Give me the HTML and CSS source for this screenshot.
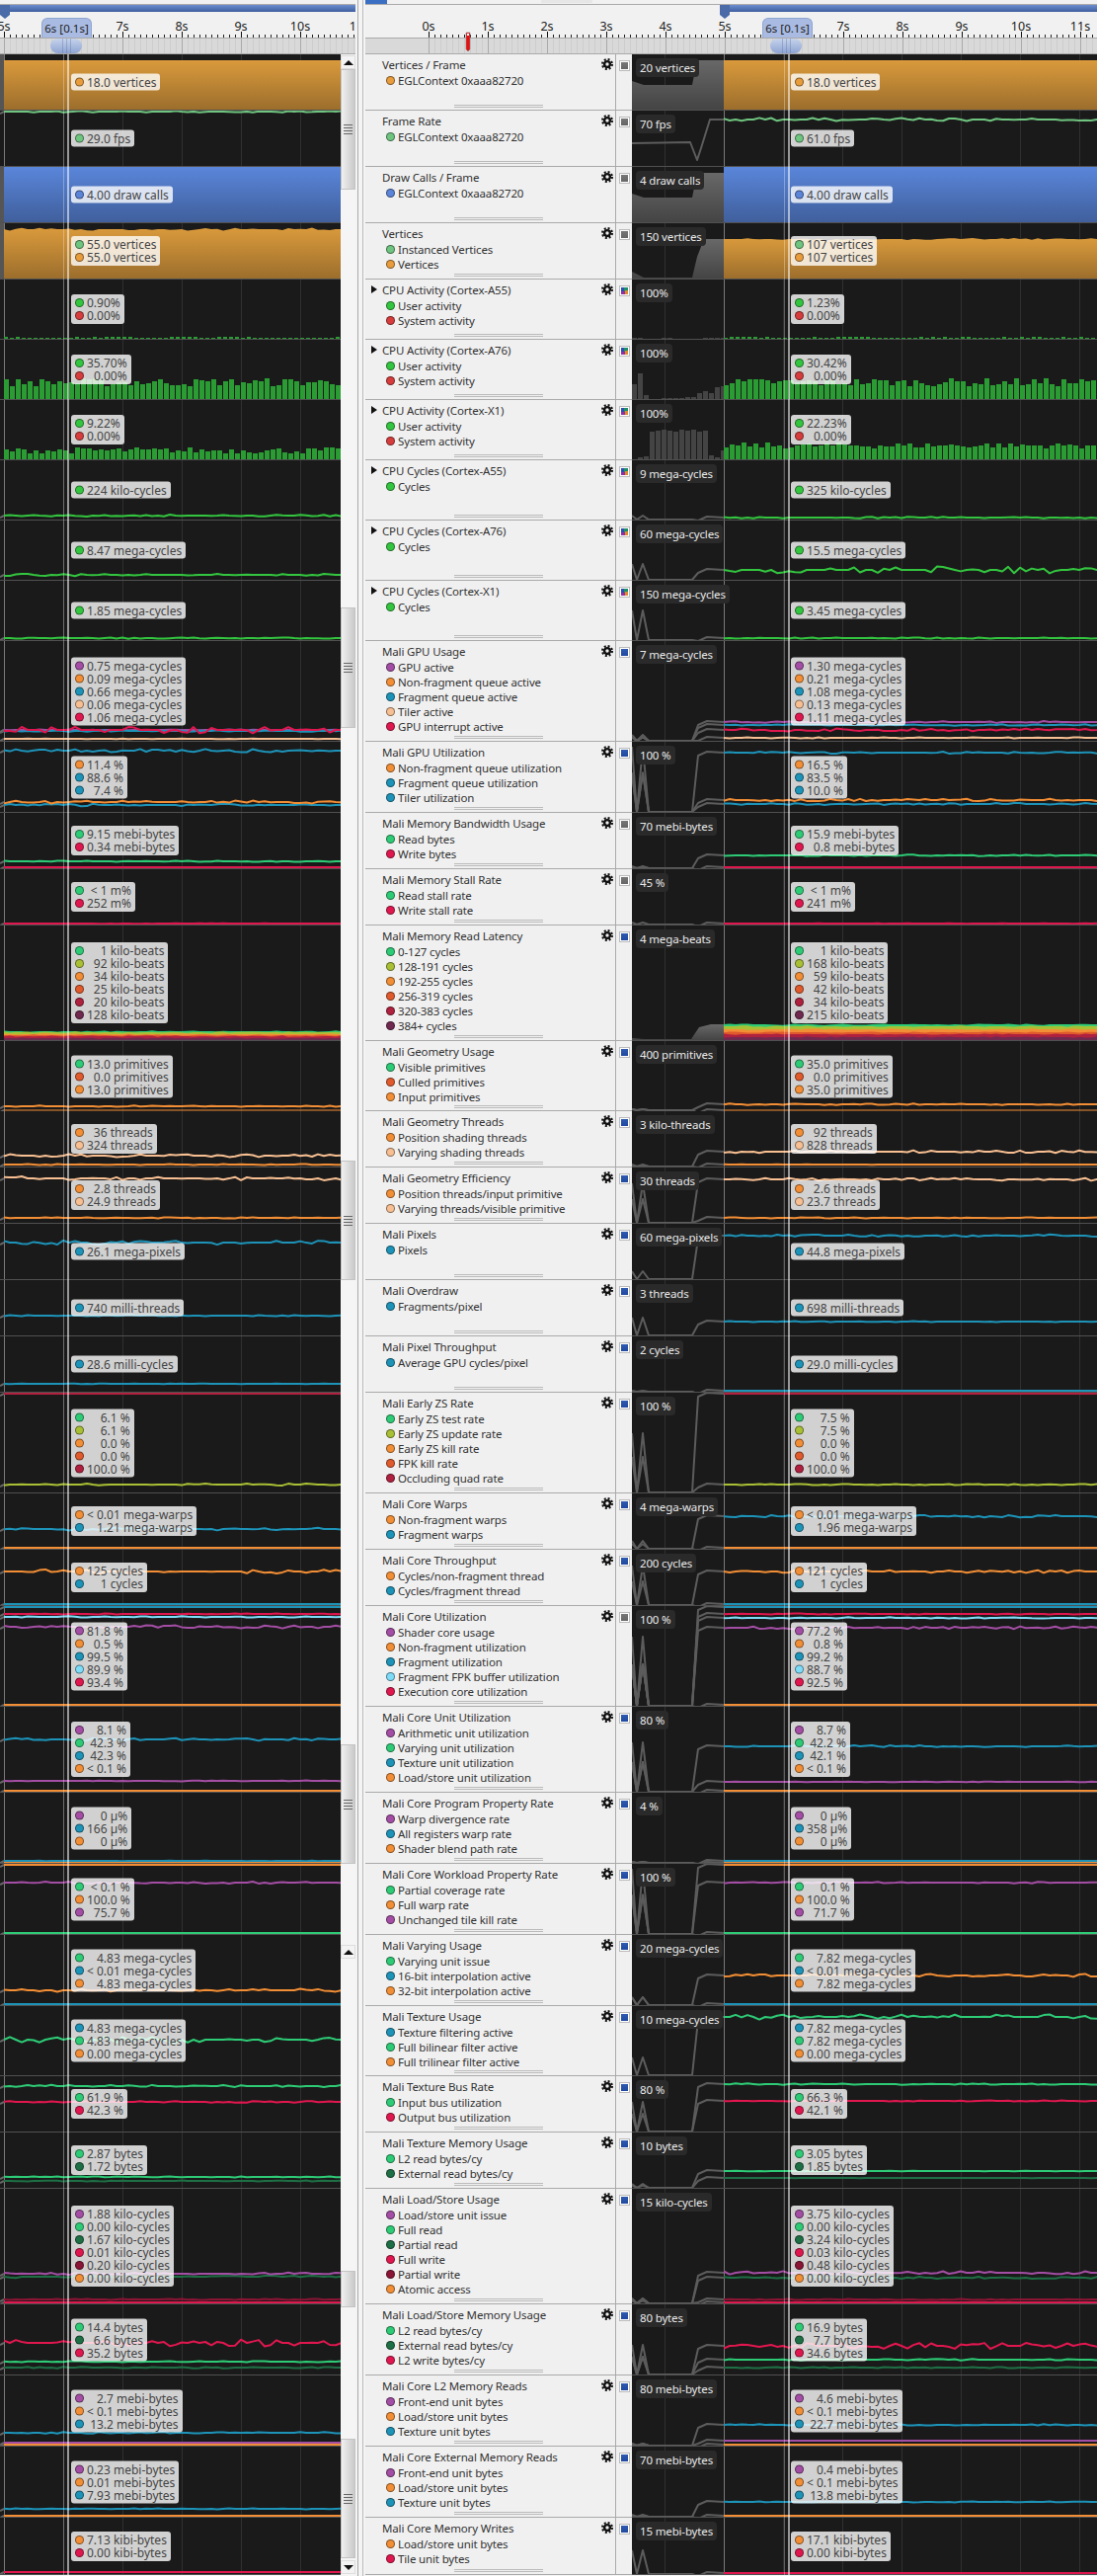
FILE: index.html
```html
<!DOCTYPE html>
<html lang="en">
<head>
  <meta charset="UTF-8">
  <title>Streamline Timeline</title>
  <link rel="stylesheet" href="styles.css">
</head>
<body>

<svg class="defs" width="0" height="0">
  <defs>
    <linearGradient id="fill-orange" x1="0" y1="0" x2="0" y2="1"><stop offset="0" stop-color="#da9a3c"/><stop offset="1" stop-color="#9c6e2c"/></linearGradient>
    <linearGradient id="fill-blue" x1="0" y1="0" x2="0" y2="1"><stop offset="0" stop-color="#5a86da"/><stop offset="1" stop-color="#405f9c"/></linearGradient>
    <linearGradient id="fill-grey" x1="0" y1="0" x2="0" y2="1"><stop offset="0" stop-color="#686868"/><stop offset="1" stop-color="#444"/></linearGradient>
    <linearGradient id="bar-blue" x1="0" y1="0" x2="0" y2="1"><stop offset="0" stop-color="#6b8dcf"/><stop offset="1" stop-color="#3f5f9f"/></linearGradient>
  </defs>
</svg>

<div class="app">
  <div class="pane-left">
    <div class="timeline" id="timeline-left">
      <div class="time-bubble">6s [0.1s]</div>
      <div class="time-pill"></div>
    </div>
    <div class="pane-body">
      <div class="chart-column" id="rows-left"></div>
      <div class="scrollbar" id="scrollbar"></div>
    </div>
  </div>
  <div class="sash"></div>
  <div class="pane-right">
    <div class="timeline" id="timeline-right">
      <div class="time-bubble">6s [0.1s]</div>
      <div class="time-pill"></div>
    </div>
    <div id="rows-right"></div>
  </div>
</div>

<script src="script.js"></script>
</body>
</html>
```

FILE: styles.css
```css
body {
  margin: 0;
  height: 2608px;
  overflow: hidden;
  background-color: #f4f4f4;
  color: #222;
  font: 12px "Noto Sans", "Open Sans", sans-serif;
}
.defs {
  position: absolute;
}
.app {
  display: flex;
}
.pane-left {
  width: 360px;
}
.sash {
  width: 4px;
  margin: 0 2px;
  height: 2608px;
  border-left: 1px solid #aaa;
  border-right: 1px solid #bbb;
}
.pane-right {
  flex: 1;
  min-width: 0;
}

/* timeline header */
.timeline {
  position: relative;
  height: 55px;
  overflow: hidden;
  background-color: #f1f1f1;
}
.timeline svg {
  display: block;
}
.timeline text {
  font: 12.5px "Noto Sans", sans-serif;
  fill: #222;
  text-anchor: middle;
}
.time-bubble {
  position: absolute;
  top: 18px;
  left: 42px;
  width: 51px;
  height: 20px;
  box-sizing: border-box;
  text-align: center;
  line-height: 20px;
  font-size: 11.5px;
  white-space: nowrap;
  background-color: #a9bbe2;
  border: 1px solid #8ea4d0;
  border-bottom: none;
  border-radius: 6px 6px 0 0;
}
.time-pill {
  position: absolute;
  top: 39px;
  left: 51px;
  width: 32px;
  height: 15px;
  border-radius: 8px;
  background: repeating-linear-gradient(90deg, transparent 0 3px, rgba(90, 110, 160, .35) 3px 4px) 9px 0 / 14px 100% no-repeat,
    linear-gradient(#c6d3ec, #8ea4d2);
}
#timeline-right .time-bubble {
  left: 402px;
}
#timeline-right .time-pill {
  left: 410px;
}

/* left pane */
.pane-body {
  display: flex;
}
.chart-column {
  position: relative;
  width: 345px;
}
.scrollbar {
  width: 15px;
  height: 2553px;
  display: flex;
  flex-direction: column;
  flex-shrink: 0;
  background-color: #f5f5f5;
}
.sb-thumb {
  box-sizing: border-box;
  display: flex;
  align-items: center;
  justify-content: center;
  background: linear-gradient(90deg, #f0f0f0, #c9c9c9);
  border: 1px solid #c4c4c4;
  flex-shrink: 0;
}
.sb-grip {
  width: 9px;
  height: 10px;
  background: repeating-linear-gradient(#666 0 1px, transparent 1px 3px);
}
.sb-button {
  box-sizing: border-box;
  height: 14px;
  display: flex;
  align-items: center;
  justify-content: center;
  background-color: #f3f3f3;
  border: 1px solid #ddd;
  flex-shrink: 0;
}
.sb-up {
  border-left: 5px solid transparent;
  border-right: 5px solid transparent;
  border-bottom: 5px solid #111;
}
.sb-down {
  border-left: 5px solid transparent;
  border-right: 5px solid transparent;
  border-top: 5px solid #111;
}

/* chart cells */
.chart {
  position: relative;
  box-sizing: border-box;
  background-color: #1a1a1a;
  border-bottom: 1px solid #505050;
  overflow: hidden;
}
.chart svg {
  display: block;
}
.no-line {
  border-bottom: none;
}
.bar {
  shape-rendering: crispEdges;
}
.cursor {
  position: absolute;
  top: 55px;
  bottom: 1px;
  left: 64px;
  width: 3px;
  border-left: 1px solid rgba(255, 255, 255, .3);
  border-right: 2px solid rgba(255, 255, 255, .55);
  pointer-events: none;
}
.tip {
  position: absolute;
  top: 50%;
  left: 72px;
  transform: translateY(-50%);
  display: grid;
  grid-template-columns: auto auto;
  column-gap: 3px;
  align-items: center;
  padding: 2px 4px;
  line-height: 13px;
  color: #444;
  white-space: nowrap;
  background-color: rgba(255, 255, 255, .8);
  border-radius: 3px;
}
.tip span {
  text-align: right;
}
.dot {
  display: inline-block;
  box-sizing: border-box;
  width: 9px;
  height: 9px;
  border-radius: 50%;
  border: 1px solid rgba(0, 0, 0, .45);
}
.chart-right .tip {
  left: 161px;
}
.value-label {
  position: absolute;
  top: 4px;
  left: 4px;
  padding: 0 4px;
  height: 19px;
  line-height: 19px;
  font-size: 11.5px;
  letter-spacing: -.15px;
  color: #e8e8e8;
  background-color: #2a2a2a;
  border-radius: 4px;
  white-space: nowrap;
}

/* right pane rows */
.row {
  display: flex;
  box-sizing: border-box;
}
.row-info {
  width: 253px;
  display: flex;
  flex-direction: column;
  box-sizing: border-box;
  font-size: 11.5px;
  letter-spacing: -.15px;
  background-color: #f0f0f0;
  border-bottom: 1px solid #aaa;
}
.row-head {
  display: flex;
  align-items: center;
  height: 18px;
  margin-top: 1px;
  padding-right: 2px;
  color: #333;
}
.row-arrow {
  width: 17px;
  flex-shrink: 0;
}
.row-arrow.open {
  box-sizing: border-box;
  height: 8px;
  width: 0;
  margin: 0 5px 0 6px;
  border-top: 4px solid transparent;
  border-bottom: 4px solid transparent;
  border-left: 6px solid #111;
}
.row-title {
  flex: 1;
  white-space: nowrap;
}
.gear {
  display: block;
  flex-shrink: 0;
}
.legend-item {
  display: flex;
  align-items: center;
  height: 15px;
  padding-left: 21px;
  column-gap: 3px;
  white-space: nowrap;
  color: #333;
}
.row-handle {
  margin: auto 0 2px 90px;
  width: 90px;
  height: 1px;
  border-top: 1px solid #bbb;
  border-bottom: 1px solid #bbb;
}
.row-tools {
  width: 17px;
  box-sizing: border-box;
  padding: 6px 0 0 3px;
  background-color: #f0f0f0;
  border-left: 1px solid #aaa;
  border-bottom: 1px solid #aaa;
}
.row-check {
  width: 11px;
  height: 11px;
  box-sizing: border-box;
  border: 1px solid #bbb;
  background-color: #fff;
  padding: 1px;
}
.row-check div {
  width: 7px;
  height: 7px;
}
.check-grey div {
  background: linear-gradient(#777, #666);
}
.check-blue div {
  background: linear-gradient(#2f5bb0, #2048a0);
}
.check-multi div {
  background: conic-gradient(#1f8f6a 0 25%, #e08a2a 25% 50%, #8e2fa8 50% 75%, #2c4fb0 75%);
}
.chart-right {
  width: 471px;
  flex-shrink: 0;
}
```

FILE: script.js
```js
// palette of the counters
const P = "#a34ea4", O = "#f28e35", T = "#1d93b8", PE = "#f7bf92", C = "#e0174f", G = "#2ecb76",
  DG = "#1e6f45", Y = "#a9c035", RO = "#e05a2c", M = "#b0213f", DP = "#70294f", LB = "#7fdcf8",
  CG = "#33c53f", CR = "#d63c3c", VO = "#e89c3c", FG = "#6fc47f", B = "#5c84d8", DR = "#8a1535";

const CPU = [["User activity", CG], ["System activity", CR]];
const UNIT = [["Front-end unit bytes", P], ["Load/store unit bytes", O], ["Texture unit bytes", T]];

// s: [colour, left y, left wiggle, right y, right wiggle, stroke]; y values are page coordinates
const rows = [
  { t: "Vertices / Frame", h: 57, chk: "grey", label: "20 vertices", legend: [["EGLContext 0xaaa82720", VO]],
    L: ["18.0 vertices"], R: ["18.0 vertices"], area: ["orange", 61, 0, 61, 0],
    ov: [[0, 82], [12, 86], [61, 86], [66, 61], [93, 61]] },
  { t: "Frame Rate", h: 57, chk: "grey", label: "70 fps", legend: [["EGLContext 0xaaa82720", FG]],
    L: ["29.0 fps"], R: ["61.0 fps"], s: [[FG, 113, .8, 121, 1.6]],
    ovLine: [[0, 145], [59, 144], [66, 162], [70, 150], [79, 121], [93, 121]] },
  { t: "Draw Calls / Frame", h: 57, chk: "grey", label: "4 draw calls", legend: [["EGLContext 0xaaa82720", B]],
    L: ["4.00 draw calls"], R: ["4.00 draw calls"], area: ["blue", 169, 0, 169, 0],
    ov: [[0, 196], [12, 200], [61, 200], [66, 175], [93, 175]] },
  { t: "Vertices", h: 57, chk: "grey", label: "150 vertices", legend: [["Instanced Vertices", FG], ["Vertices", VO]],
    L: ["55.0 vertices", "55.0 vertices"], R: ["107 vertices", "107 vertices"], area: ["orange", 232, 1.5, 242, 1],
    ov: [[0, 275], [12, 281], [61, 281], [66, 260], [73, 242], [93, 242]] },
  { t: "CPU Activity (Cortex-A55)", h: 61, arrow: 1, chk: "multi", label: "100%", legend: CPU,
    L: ["0.90%", "0.00%"], R: ["1.23%", "0.00%"], bars: [1.4, .4, 1.4, .4], ovBars: [1, 1, 0, 0, 0, 1, 1, 0, 0, 0, 0, 0, 1, 1, 1, 1] },
  { t: "CPU Activity (Cortex-A76)", h: 61, arrow: 1, chk: "multi", label: "100%", legend: CPU,
    L: ["35.70%", "0.00%"], R: ["30.42%", "0.00%"], bars: [17, 4, 17, 4], ovBars: [15, 26, 4, 0, 0, 1, 1, 1, 1, 2, 2, 6, 8, 6, 12, 13] },
  { t: "CPU Activity (Cortex-X1)", h: 61, arrow: 1, chk: "multi", label: "100%", legend: CPU,
    L: ["9.22%", "0.00%"], R: ["22.23%", "0.00%"], bars: [9, 3, 14, 3], ovBars: [0, 2, 3, 28, 29, 30, 29, 28, 30, 29, 30, 28, 29, 4, 2, 9] },
  { t: "CPU Cycles (Cortex-A55)", h: 61, arrow: 1, chk: "multi", label: "9 mega-cycles", legend: [["Cycles", CG]],
    L: ["224 kilo-cycles"], R: ["325 kilo-cycles"], sp: 4, s: [[CG, 522, 1, 524, .8]] },
  { t: "CPU Cycles (Cortex-A76)", h: 61, arrow: 1, chk: "multi", label: "60 mega-cycles", legend: [["Cycles", CG]],
    L: ["8.47 mega-cycles"], R: ["15.5 mega-cycles"], sp: 16, s: [[CG, 582, 1.2, 577, 3.5]] },
  { t: "CPU Cycles (Cortex-X1)", h: 61, arrow: 1, chk: "multi", label: "150 mega-cycles", legend: [["Cycles", CG]],
    L: ["1.85 mega-cycles"], R: ["3.45 mega-cycles"], sp: 30, s: [[CG, 646, .7, 646, .5]] },
  { t: "Mali GPU Usage", h: 102, chk: "blue", label: "7 mega-cycles",
    legend: [["GPU active", P], ["Non-fragment queue active", O], ["Fragment queue active", T], ["Tiler active", PE], ["GPU interrupt active", C]],
    L: ["0.75 mega-cycles", "0.09 mega-cycles", "0.66 mega-cycles", "0.06 mega-cycles", "1.06 mega-cycles"],
    R: ["1.30 mega-cycles", "0.21 mega-cycles", "1.08 mega-cycles", "0.13 mega-cycles", "1.11 mega-cycles"],
    s: [[P, 739, .6, 731, 1], [T, 740, .8, 734, .7], [C, 739, 3.5, 739, 1.4], [PE, 748, .2, 747, .6]] },
  { t: "Mali GPU Utilization", h: 72, chk: "blue", label: "100 %", sp: 66,
    legend: [["Non-fragment queue utilization", O], ["Fragment queue utilization", T], ["Tiler utilization", T]],
    L: ["11.4 %", "88.6 %", "7.4 %"], R: ["16.5 %", "83.5 %", "10.0 %"],
    s: [[T, 760, 1.6, 762, 1], [T, 815, 1.2, 814, 1], [O, 812, 1.5, 810, 1.2]] },
  { t: "Mali Memory Bandwidth Usage", h: 57, chk: "grey", label: "70 mebi-bytes", legend: [["Read bytes", G], ["Write bytes", C]],
    L: ["9.15 mebi-bytes", "0.34 mebi-bytes"], R: ["15.9 mebi-bytes", "0.8 mebi-bytes"], sp: 2,
    s: [[G, 872, .6, 866, .7], [C, 878, 0, 878, 0]] },
  { t: "Mali Memory Stall Rate", h: 57, chk: "grey", label: "45 %", legend: [["Read stall rate", G], ["Write stall rate", C]],
    L: ["< 1 m%", "252 m%"], R: ["< 1 m%", "241 m%"], sp: 2, s: [[C, 935, .2, 935, .2]] },
  { t: "Mali Memory Read Latency", h: 117, chk: "blue", label: "4 mega-beats",
    legend: [["0-127 cycles", G], ["128-191 cycles", Y], ["192-255 cycles", O], ["256-319 cycles", RO], ["320-383 cycles", M], ["384+ cycles", DP]],
    L: ["1 kilo-beats", "92 kilo-beats", "34 kilo-beats", "25 kilo-beats", "20 kilo-beats", "128 kilo-beats"],
    R: ["1 kilo-beats", "168 kilo-beats", "59 kilo-beats", "42 kilo-beats", "34 kilo-beats", "215 kilo-beats"],
    stack: [[G, 1044, 1037], [Y, 1045, 1039], [O, 1047, 1042], [RO, 1048, 1045], [M, 1049, 1047], [DP, 1051, 1050]],
    ov: [[0, 1051], [12, 1052], [60, 1052], [68, 1040], [80, 1037], [93, 1037]] },
  { t: "Mali Geometry Usage", h: 71, noLine: 1, chk: "blue", label: "400 primitives",
    legend: [["Visible primitives", G], ["Culled primitives", RO], ["Input primitives", O]],
    L: ["13.0 primitives", "0.0 primitives", "13.0 primitives"], R: ["35.0 primitives", "0.0 primitives", "35.0 primitives"], sp: 1,
    s: [[O, 1120, .7, 1118, .8], [O, 1124, 0, 1124, 0, 1]] },
  { t: "Mali Geometry Threads", h: 57, chk: "blue", label: "3 kilo-threads",
    legend: [["Position shading threads", O], ["Varying shading threads", PE]],
    L: ["36 threads", "324 threads"], R: ["92 threads", "828 threads"], sp: 2,
    s: [[PE, 1170, 1.5, 1166, 1.4], [O, 1179, .5, 1179, .2]] },
  { t: "Mali Geometry Efficiency", h: 57, chk: "blue", label: "30 threads",
    legend: [["Position threads/input primitive", O], ["Varying threads/visible primitive", PE]],
    L: ["2.8 threads", "24.9 threads"], R: ["2.6 threads", "23.7 threads"], sp: 40,
    s: [[PE, 1193, 2, 1194, 1.4], [O, 1233, .6, 1233, .5]] },
  { t: "Mali Pixels", h: 57, chk: "blue", label: "60 mega-pixels", legend: [["Pixels", T]],
    L: ["26.1 mega-pixels"], R: ["44.8 mega-pixels"], sp: 8, s: [[T, 1258, 2.2, 1251, 1.2]] },
  { t: "Mali Overdraw", h: 57, chk: "blue", label: "3 threads", legend: [["Fragments/pixel", T]],
    L: ["740 milli-threads"], R: ["698 milli-threads"], sp: 18, s: [[T, 1332, .7, 1338, .5]] },
  { t: "Mali Pixel Throughput", h: 57, chk: "blue", label: "2 cycles", legend: [["Average GPU cycles/pixel", T]],
    L: ["28.6 milli-cycles"], R: ["29.0 milli-cycles"], sp: 1, s: [[T, 1401, .3, 1408, 0]] },
  { t: "Mali Early ZS Rate", h: 102, chk: "blue", label: "100 %", sp: 60,
    legend: [["Early ZS test rate", G], ["Early ZS update rate", Y], ["Early ZS kill rate", O], ["FPK kill rate", RO], ["Occluding quad rate", M]],
    L: ["6.1 %", "6.1 %", "0.0 %", "0.0 %", "100.0 %"], R: ["7.5 %", "7.5 %", "0.0 %", "0.0 %", "100.0 %"],
    s: [[M, 1411, 0, 1411, 0], [Y, 1503, 1, 1503, .6]] },
  { t: "Mali Core Warps", h: 57, chk: "blue", label: "4 mega-warps", legend: [["Non-fragment warps", O], ["Fragment warps", T]],
    L: ["< 0.01 mega-warps", "1.21 mega-warps"], R: ["< 0.01 mega-warps", "1.96 mega-warps"], sp: 8,
    s: [[T, 1548, 1.5, 1535, 1.2], [O, 1567, 0, 1567, 0]] },
  { t: "Mali Core Throughput", h: 57, chk: "blue", label: "200 cycles", legend: [["Cycles/non-fragment thread", O], ["Cycles/fragment thread", T]],
    L: ["125 cycles", "1 cycles"], R: ["121 cycles", "1 cycles"], sp: 40,
    s: [[O, 1591, 3, 1591, 1.4], [T, 1624, 0, 1624, 0]] },
  { t: "Mali Core Utilization", h: 102, chk: "grey", label: "100 %", sp: 70,
    legend: [["Shader core usage", P], ["Non-fragment utilization", O], ["Fragment utilization", T], ["Fragment FPK buffer utilization", LB], ["Execution core utilization", C]],
    L: ["81.8 %", "0.5 %", "99.5 %", "89.9 %", "93.4 %"], R: ["77.2 %", "0.8 %", "99.2 %", "88.7 %", "92.5 %"],
    s: [[T, 1627, 0, 1627, 0], [C, 1634, .6, 1634, .5], [LB, 1637, .7, 1638, .7], [P, 1647, 1.6, 1648, 1.4], [O, 1726, 0, 1726, 0]] },
  { t: "Mali Core Unit Utilization", h: 87, chk: "blue", label: "80 %", sp: 50,
    legend: [["Arithmetic unit utilization", P], ["Varying unit utilization", G], ["Texture unit utilization", T], ["Load/store unit utilization", O]],
    L: ["8.1 %", "42.3 %", "42.3 %", "< 0.1 %"], R: ["8.7 %", "42.2 %", "42.1 %", "< 0.1 %"],
    s: [[T, 1761, 1.4, 1768, 1], [P, 1803, .4, 1804, .3], [O, 1813, 0, 1813, 0]] },
  { t: "Mali Core Program Property Rate", h: 72, chk: "blue", label: "4 %", sp: 1,
    legend: [["Warp divergence rate", P], ["All registers warp rate", T], ["Shader blend path rate", O]],
    L: ["0 µ%", "166 µ%", "0 µ%"], R: ["0 µ%", "358 µ%", "0 µ%"],
    s: [[T, 1884, .2, 1884, .1], [O, 1886, 0, 1886, 0]] },
  { t: "Mali Core Workload Property Rate", h: 72, chk: "blue", label: "100 %", sp: 66,
    legend: [["Partial coverage rate", G], ["Full warp rate", O], ["Unchanged tile kill rate", P]],
    L: ["< 0.1 %", "100.0 %", "75.7 %"], R: ["0.1 %", "100.0 %", "71.7 %"],
    s: [[O, 1888, 0, 1888, 0], [P, 1906, 1.1, 1906, .8], [G, 1957, 0, 1957, 0]] },
  { t: "Mali Varying Usage", h: 72, chk: "blue", label: "20 mega-cycles", sp: 8,
    legend: [["Varying unit issue", G], ["16-bit interpolation active", T], ["32-bit interpolation active", O]],
    L: ["4.83 mega-cycles", "< 0.01 mega-cycles", "4.83 mega-cycles"], R: ["7.82 mega-cycles", "< 0.01 mega-cycles", "7.82 mega-cycles"],
    s: [[T, 2029, 0, 2029, 0], [O, 2015, 1.5, 2000, 1.6]] },
  { t: "Mali Texture Usage", h: 71, chk: "blue", label: "10 mega-cycles", sp: 18,
    legend: [["Texture filtering active", T], ["Full bilinear filter active", G], ["Full trilinear filter active", O]],
    L: ["4.83 mega-cycles", "4.83 mega-cycles", "0.00 mega-cycles"], R: ["7.82 mega-cycles", "7.82 mega-cycles", "0.00 mega-cycles"],
    s: [[G, 2065, 3, 2042, 2.6]] },
  { t: "Mali Texture Bus Rate", h: 57, chk: "blue", label: "80 %", sp: 30, legend: [["Input bus utilization", G], ["Output bus utilization", C]],
    L: ["61.9 %", "42.3 %"], R: ["66.3 %", "42.1 %"], s: [[G, 2112, 1.2, 2110, .7], [C, 2128, .8, 2127, .5]] },
  { t: "Mali Texture Memory Usage", h: 57, chk: "blue", label: "10 bytes", sp: 4, legend: [["L2 read bytes/cy", G], ["External read bytes/cy", DG]],
    L: ["2.87 bytes", "1.72 bytes"], R: ["3.05 bytes", "1.85 bytes"], s: [[G, 2204, .5, 2198, .2], [DG, 2208, .4, 2205, .2]] },
  { t: "Mali Load/Store Usage", h: 117, chk: "blue", label: "15 kilo-cycles", sp: 5,
    legend: [["Load/store unit issue", P], ["Full read", G], ["Partial read", DG], ["Full write", C], ["Partial write", DR], ["Atomic access", O]],
    L: ["1.88 kilo-cycles", "0.00 kilo-cycles", "1.67 kilo-cycles", "0.01 kilo-cycles", "0.20 kilo-cycles", "0.00 kilo-cycles"],
    R: ["3.75 kilo-cycles", "0.00 kilo-cycles", "3.24 kilo-cycles", "0.03 kilo-cycles", "0.48 kilo-cycles", "0.00 kilo-cycles"],
    s: [[DG, 2305, 1.2, 2306, 1], [P, 2302, 1.4, 2301, 1.6], [DR, 2328, .6, 2328, .6], [C, 2331, 0, 2331, 0]] },
  { t: "Mali Load/Store Memory Usage", h: 72, chk: "blue", label: "80 bytes", sp: 30,
    legend: [["L2 read bytes/cy", G], ["External read bytes/cy", DG], ["L2 write bytes/cy", C]],
    L: ["14.4 bytes", "6.6 bytes", "35.2 bytes"], R: ["16.9 bytes", "7.7 bytes", "34.6 bytes"],
    s: [[C, 2372, 3.5, 2375, 3], [G, 2391, .6, 2389, .8], [DG, 2397, .8, 2397, .6]] },
  { t: "Mali Core L2 Memory Reads", h: 72, chk: "blue", label: "80 mebi-bytes", sp: 2, legend: UNIT,
    L: ["2.7 mebi-bytes", "< 0.1 mebi-bytes", "13.2 mebi-bytes"], R: ["4.6 mebi-bytes", "< 0.1 mebi-bytes", "22.7 mebi-bytes"],
    s: [[T, 2463, .8, 2455, .7], [P, 2473, 0, 2471, 0], [O, 2475, 0, 2475, 0]] },
  { t: "Mali Core External Memory Reads", h: 72, chk: "blue", label: "70 mebi-bytes", sp: 2, legend: UNIT,
    L: ["0.23 mebi-bytes", "0.01 mebi-bytes", "7.93 mebi-bytes"], R: ["0.4 mebi-bytes", "< 0.1 mebi-bytes", "13.8 mebi-bytes"],
    s: [[T, 2540, .5, 2533, .4], [O, 2547, 0, 2547, 0]] },
  { t: "Mali Core Memory Writes", h: 58, chk: "blue", label: "15 mebi-bytes", sp: 24, legend: [["Load/store unit bytes", O], ["Tile unit bytes", C]],
    L: ["7.13 kibi-bytes", "0.00 kibi-bytes"], R: ["17.1 kibi-bytes", "0.00 kibi-bytes"], s: [[C, 2604, 0, 2605, 0]] }
];

const GEAR = '<svg class="gear" width="12" height="12" viewBox="0 0 12 12"><circle cx="6" cy="6" r="2.9" fill="none" stroke="#111" stroke-width="2.4"/><circle cx="6" cy="6" r="4.9" fill="none" stroke="#111" stroke-width="2.2" stroke-dasharray="1.95 1.9"/></svg>';

// small repeatable random numbers so each series gets its own wobble
let seed = 7;
function rand() {
  seed = (seed * 16807) % 2147483647;
  return seed / 2147483647;
}

function wobble(y, amp, x0, x1) {
  const pts = [];
  for (let x = x0; x <= x1; x += 6) {
    const off = rand() < 0.35 ? 0 : (rand() * 2 - 1) * amp;
    pts.push([x, y + off]);
  }
  return pts;
}

function str(pts) {
  return pts.map(p => p[0] + "," + p[1].toFixed(1)).join(" ");
}

function line(pts, colour, width) {
  return `<polyline points="${str(pts)}" fill="none" stroke="${colour}" stroke-width="${width}" stroke-linejoin="round"/>`;
}

function plot(row, top, right) {
  const w = right ? 471 : 345;
  const x0 = right ? 93 : 4;
  const bottom = top + row.h - 1;
  let out = "";

  // gridlines, one per second
  for (let x = x0 - 60; x < w; x += 60) {
    if (x < 0) continue;
    out += `<rect x="${x}" y="${top}" width="1" height="${row.h}" fill="${x === x0 ? "#7a7a7a" : "#303030"}"/>`;
  }

  // grey summary before the 5s mark
  if (right && row.ov) {
    out += `<polygon points="${str(row.ov)} 93,${bottom} 0,${bottom}" fill="url(#fill-grey)"/>`;
  }
  if (right && row.ovLine) {
    out += line(row.ovLine, "#5c5c5c", 2);
  }
  if (right && row.ovBars) {
    row.ovBars.forEach((b, i) => {
      out += `<rect x="${i * 6}" y="${bottom - b}" width="5" height="${b}" fill="#444"/>`;
    });
  }
  if (right && row.s && !row.ovLine) {
    const sp = row.sp === undefined ? 6 : row.sp;
    row.s.forEach((s, i) => {
      const scale = i === row.s.length - 1 || s[3] > bottom - 8 ? 1 : .6;
      const tip = bottom - sp * scale;
      out += line([[0, tip], [5, bottom], [11, tip], [17, bottom], [61, bottom], [67, s[3] + 3], [76, s[3] - 1], [93, s[3]]], "#5c5c5c", 2);
    });
  }
  if (!right && row.s) {
    row.s.forEach(s => { out += line([[0, s[1] + 2], [4, s[1]]], "#666", 2); });
  }

  const yi = right ? 3 : 1;

  if (row.area) {
    const pts = wobble(row.area[yi], row.area[yi + 1], x0, w + 6);
    out += `<polygon points="${str(pts)} ${w},${bottom} ${x0},${bottom}" fill="url(#fill-${row.area[0]})"/>`;
    if (!right) out += `<rect x="0" y="${top}" width="4" height="${row.h - 1}" fill="#555"/>`;
  }
  if (row.bars) {
    const h = row.bars[right ? 2 : 0];
    const v = row.bars[right ? 3 : 1];
    const gap = h < 2 ? 2 : 1;
    for (let x = x0; x < w; x += 6) {
      const bh = Math.round(Math.max(1, h + (rand() * 2 - 1) * v));
      out += `<rect class="bar" x="${x}" y="${bottom - bh}" width="${6 - gap}" height="${bh}" fill="#2a9c33"/>`;
    }
  }
  if (row.stack) {
    row.stack.forEach(s => {
      const pts = wobble(s[right ? 2 : 1], .7, x0, w + 6);
      out += `<polygon points="${str(pts)} ${w},${bottom} ${x0},${bottom}" fill="${s[0]}"/>`;
    });
  }
  if (row.s) {
    row.s.forEach(s => {
      out += line(wobble(s[yi], s[yi + 1], x0, w + 6), s[0], s[5] || 2);
    });
  }

  // coordinates in the rows are page based, so shift the drawing up to the cell
  return `<svg width="${w}" height="${row.h}" viewBox="0 ${top} ${w} ${row.h}">${out}</svg>`;
}

function tip(row, right) {
  const vals = right ? row.R : row.L;
  const cells = vals.map((v, i) => `<i class="dot" style="background-color:${row.legend[i][1]}"></i><span>${v}</span>`).join("");
  return `<div class="tip">${cells}</div>`;
}

function info(row) {
  const legend = row.legend.map(l => `<div class="legend-item"><i class="dot" style="background-color:${l[1]}"></i>${l[0]}</div>`).join("");
  return `<div class="row-info">
    <div class="row-head"><span class="row-arrow${row.arrow ? " open" : ""}"></span><span class="row-title">${row.t}</span>${GEAR}</div>
    ${legend}
    <div class="row-handle"></div>
  </div>
  <div class="row-tools"><div class="row-check check-${row.chk}"><div></div></div></div>`;
}

function buildRows() {
  let left = "", right = "", top = 55;
  rows.forEach(row => {
    const line = row.noLine ? " no-line" : "";
    const h = `style="height:${row.h}px"`;
    left += `<div class="chart${line}" ${h}>${plot(row, top, false)}${tip(row, false)}</div>`;
    right += `<div class="row" ${h}>${info(row)}<div class="chart chart-right${line}">${plot(row, top, true)}<div class="value-label">${row.label}</div>${tip(row, true)}</div></div>`;
    top += row.h;
  });
  document.getElementById("rows-left").innerHTML = left + '<div class="cursor" style="top:0"></div>';
  document.getElementById("rows-right").innerHTML = right;
  const cursor = document.createElement("div");
  cursor.className = "cursor";
  cursor.style.left = "794px";
  document.body.appendChild(cursor);
}

function buildTimeline(el, opts) {
  const w = opts.width;
  let s = `<rect x="0" y="4" width="${w}" height="1" fill="#aaa"/>`;
  s += `<rect x="0" y="38" width="${w}" height="16" fill="#d9d9d9"/><rect x="0" y="38" width="${w}" height="1" fill="#aaa"/><rect x="0" y="54" width="${w}" height="1" fill="#aaa"/>`;
  s += opts.extra;
  if (opts.barX !== undefined) {
    s += `<rect x="${opts.barX}" y="5" width="${w - opts.barX}" height="7" fill="url(#bar-blue)"/>`;
    s += `<polygon points="${opts.barX},5 ${opts.barX + 10},5 ${opts.barX + 10},15 ${opts.barX + 5},19 ${opts.barX},15" fill="#4a6aa8"/>`;
  }
  for (let x = opts.firstTick; x < w; x += 6) {
    s += `<rect x="${x}" y="35" width="1" height="3" fill="#222"/><rect x="${x}" y="39" width="1" height="15" fill="#cdcdcd"/>`;
  }
  let sec = opts.firstSec;
  for (let x = opts.zero; x < w + 30; x += 60) {
    s += `<rect x="${x}" y="32" width="1" height="6" fill="#111"/><rect x="${x}" y="39" width="1" height="15" fill="#aaa"/>`;
    if (sec !== 6) s += `<text x="${x}" y="31">${sec}s</text>`;
    sec++;
  }
  s += opts.over || "";
  el.insertAdjacentHTML("afterbegin", `<svg width="${w}" height="55">${s}</svg>`);
}

function buildScrollbar() {
  const top = 55;
  const parts = [
    ["up", 56, 69], ["thumb", 70, 192, 1], ["thumb", 615, 737, 1], ["thumb", 1175, 1296, 1], ["thumb", 1766, 1887, 1],
    ["up", 1969, 1983], ["thumb", 2299, 2336], ["thumb", 2469, 2590, 1], ["down", 2592, 2606]
  ];
  let y = top, html = "";
  parts.forEach(p => {
    const margin = `margin-top:${p[1] - y}px`;
    if (p[0] === "thumb") {
      html += `<div class="sb-thumb" style="${margin};height:${p[2] - p[1]}px">${p[3] ? '<div class="sb-grip"></div>' : ""}</div>`;
    } else {
      html += `<div class="sb-button" style="${margin}"><div class="sb-${p[0]}"></div></div>`;
    }
    y = p[1] + (p[0] === "thumb" ? p[2] - p[1] : 14);
  });
  document.getElementById("scrollbar").innerHTML = html;
}

buildRows();
buildScrollbar();
buildTimeline(document.getElementById("timeline-left"), {
  width: 360, firstTick: 4, zero: 4, firstSec: 5, barX: 0, extra: ""
});
buildTimeline(document.getElementById("timeline-right"), {
  width: 741, firstTick: 64, zero: 64, firstSec: 0, barX: 359,
  extra: '<rect x="0" y="0" width="22" height="4" fill="#3a6fc4"/><rect x="178" y="0" width="52" height="3" rx="1" fill="#e6e6e6"/>',
  over: '<polygon points="102,33 106,33 106,50 104,52 102,50" fill="#e81010" stroke="#888" stroke-width=".6"/><rect x="103" y="34" width="2" height="2" fill="#fff"/>'
});
```
